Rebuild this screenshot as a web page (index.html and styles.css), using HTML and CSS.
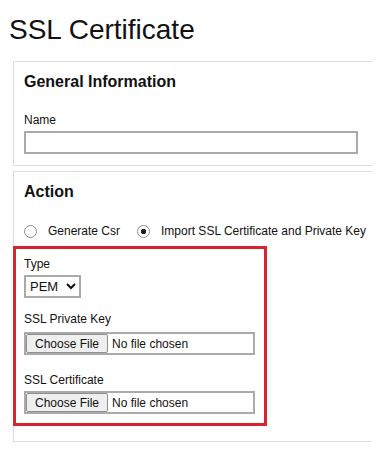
FILE: index.html
```html
<!DOCTYPE html>
<html lang="en">
<head>
  <meta charset="UTF-8">
  <meta name="viewport" content="width=device-width, initial-scale=1.0">
  <title>SSL Certificate</title>
  <link rel="stylesheet" href="styles.css">
</head>
<body>

  <h1 class="page-title">SSL Certificate</h1>

  <div class="card">
    <h2>General Information</h2>
    <label class="field-label" for="name">Name</label>
    <input type="text" id="name" class="text-input">
  </div>

  <div class="card">
    <h2>Action</h2>

    <div class="radio-row">
      <label class="radio"><input type="radio" name="action" value="csr"> Generate Csr</label>
      <label class="radio"><input type="radio" name="action" value="import" checked> Import SSL Certificate and Private Key</label>
    </div>

    <div class="highlight">
      <label class="field-label" for="type">Type</label>
      <select id="type" class="type-select">
        <option value="pem">PEM</option>
        <option value="der">DER</option>
      </select>

      <label class="field-label gap" for="key">SSL Private Key</label>
      <input type="file" id="key" class="file-input">

      <label class="field-label gap-lg" for="cert">SSL Certificate</label>
      <input type="file" id="cert" class="file-input">
    </div>
  </div>

</body>
</html>
```

FILE: styles.css
```css
html {
  overflow: hidden;
}

body {
  margin: 8px 8px 0 8px;
  font-family: "Liberation Sans", Arial, sans-serif;
  color: #111;
  background: #fff;
}

.page-title {
  font-size: 28px;
  font-weight: normal;
  line-height: 32px;
  margin: 6px 0 15px 1px;
}

/* cards are cut off by the right edge of the window */
.card {
  border: 1px solid #dcdcdc;
  border-right: none;
  margin: 0 -8px 5px 5px;
  padding: 10px 10px 11px 10px;
}

.card:last-child {
  margin-bottom: 0;
}

.card h2 {
  font-size: 16px;
  line-height: 20px;
  margin: 0 0 21px 0;
}

.field-label {
  display: block;
  font-size: 12px;
  line-height: 15px;
  margin-bottom: 3px;
}

.field-label.gap {
  margin-top: 14px;
  margin-bottom: 5px;
}

.field-label.gap-lg {
  margin-top: 18px;
}

.text-input {
  display: block;
  box-sizing: border-box;
  width: 334px;
  height: 23px;
  border: 2px solid #aaa;
  margin: 0;
  padding: 0 4px;
}

.radio-row {
  display: flex;
  align-items: center;
  gap: 17px;
  font-size: 12px;
  line-height: 16px;
}

.radio {
  display: flex;
  align-items: center;
  gap: 11px;
}

.radio input {
  appearance: none;
  width: 13px;
  height: 13px;
  margin: 0;
  border: 1px solid #8f8f8f;
  border-radius: 50%;
  background: #fff;
}

.radio input:checked {
  background: radial-gradient(circle, #222 0 2.5px, #fff 3px);
}

.highlight {
  border: 3px solid #d9232e;
  width: 232px;
  margin: 7px 0 4px -11px;
  padding: 8px 8px 9px 8px;
}

.type-select {
  display: block;
  box-sizing: border-box;
  height: 23px;
  width: 57px;
  border: 2px solid #aaa;
  border-radius: 0;
  background: #fff;
  font-family: "Liberation Sans", Arial, sans-serif;
  font-size: 13px;
  color: #111;
  margin: 0;
}

.file-input {
  display: block;
  box-sizing: border-box;
  width: 231px;
  height: 23px;
  border: 2px solid #aaa;
  background: #fff;
  margin: 0;
  padding: 0;
  font-family: "Liberation Sans", Arial, sans-serif;
  font-size: 12px;
  color: #111;
}

.file-input::file-selector-button {
  font-family: "Liberation Sans", Arial, sans-serif;
  font-size: 12px;
  height: 19px;
  margin: 0 4px 0 0;
  padding: 0 8px;
  background: #efefef;
  border: 1px solid #8f8f8f;
  border-radius: 2px;
  color: #111;
}
```
